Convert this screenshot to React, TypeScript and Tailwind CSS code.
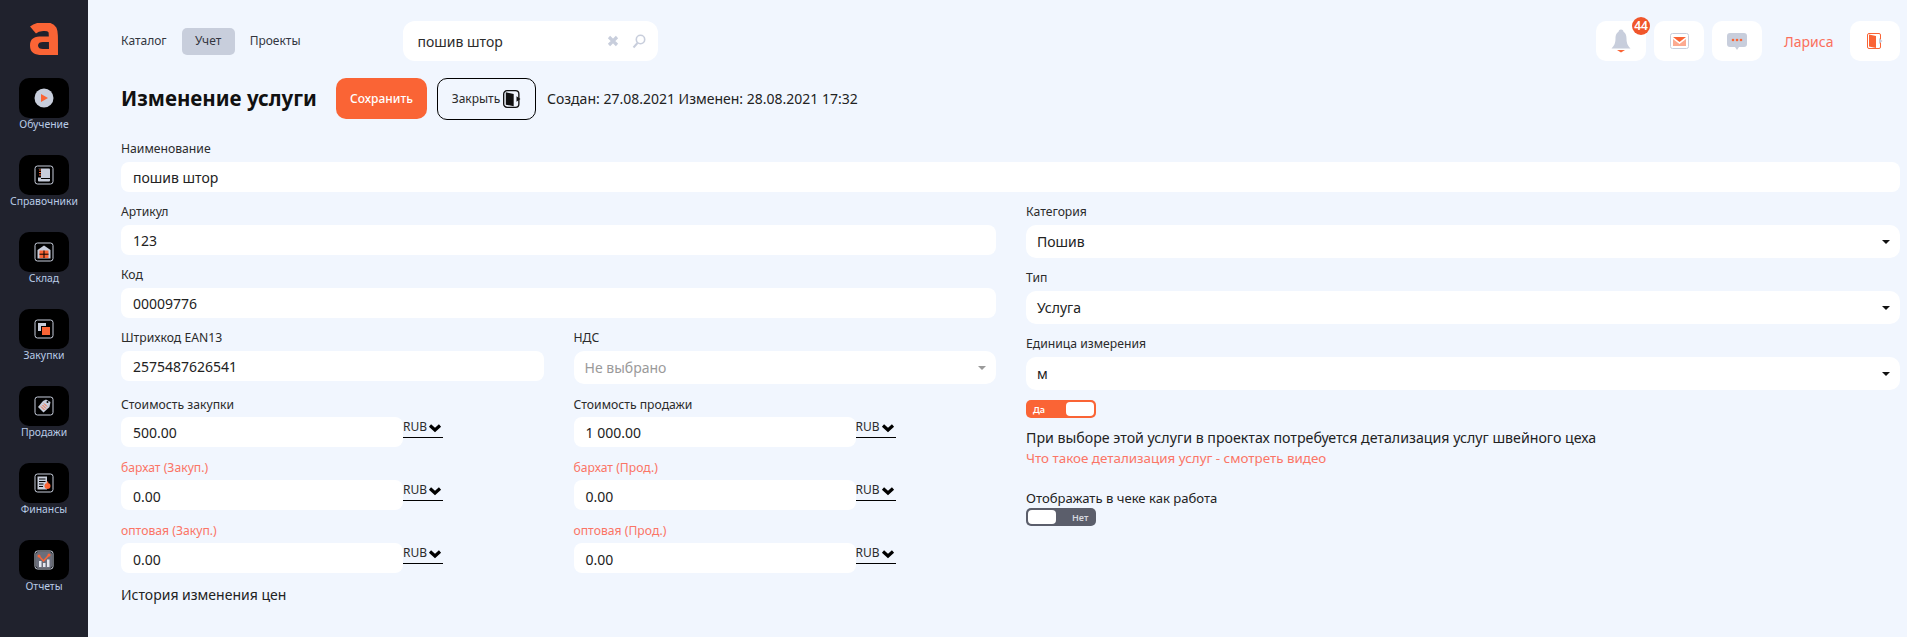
import React from "react";

const O = "#fa6435";
const G = "#c8cedc";

function Frame({ children }: { children: React.ReactNode }) {
  return (
    <svg width="20" height="20" viewBox="0 0 20 20" fill="none">
      <rect x="1" y="1" width="18" height="18" rx="2.5" stroke="#c8cedc" strokeWidth="1" />
      {children}
    </svg>
  );
}

const navIcons: Record<string, React.ReactNode> = {
  play: (
    <svg width="20" height="20" viewBox="0 0 20 20">
      <circle cx="10" cy="10" r="9.5" fill="#c8cedc" />
      <path d="M7 6l7 4-7 4z" fill={O} />
    </svg>
  ),
  book: (
    <Frame>
      <rect x="4" y="3.5" width="12" height="13" rx="1" fill="#c8cedc" />
      <rect x="4" y="3.5" width="3" height="9" fill="#000" />
      <path d="M5 5h2M5 7.5h2M5 10h2" stroke={O} strokeWidth="1.2" />
      <path d="M7 13.5h9" stroke="#000" strokeWidth="1" />
    </Frame>
  ),
  store: (
    <Frame>
      <path d="M3.5 8L10 3.5 16.500 8v8.500h-13z" fill="#c8cedc" />
      <rect x="5.500" y="8.500" width="9" height="7.500" fill={O} />
      <path d="M10 8.500v7.500M5.500 12.200h9" stroke="#000" strokeWidth="1" />
    </Frame>
  ),
  buy: (
    <Frame>
      <path d="M4 4h8v3H7v5H4z" fill="#c8cedc" />
      <rect x="8" y="8" width="8" height="8" fill={O} />
    </Frame>
  ),
  tag: (
    <Frame>
      <path d="M12 3.500l4.500 2.500-1 5-6 5.500-5.500-5.500 5-6z" fill="#c8cedc" />
      <path d="M7 10.500l3.500 3.500M8.500 9l3.500 3.500M10 7.500l3 3" stroke={O} strokeWidth="1" />
      <circle cx="13.500" cy="6" r="1" fill="#000" />
    </Frame>
  ),
  fin: (
    <Frame>
      <rect x="3.500" y="3.500" width="9.500" height="13" fill="#c8cedc" />
      <path d="M5 6h6.500M5 8.500h6.500M5 11h4.500M5 13.500h4" stroke="#000" strokeWidth="1" />
      <circle cx="13.500" cy="13" r="3" fill={O} />
      <path d="M13.500 8.500v2" stroke={O} strokeWidth="1.500" />
    </Frame>
  ),
  report: (
    <Frame>
      <rect x="2" y="2" width="16" height="16" rx="2" fill="#6b6e7b" />
      <path d="M5 11h2.500v6H5zM9 13h2.500v4H9zM13 9.500h2.500V17H13z" fill="#e4e7ee" />
      <path d="M5 6l4.500 5L15 5" stroke={O} strokeWidth="1.500" fill="none" />
      <circle cx="5" cy="6" r="1.500" fill={O} />
      <circle cx="15" cy="5" r="1.500" fill={O} />
    </Frame>
  ),
};

const nav = [
  ["play", "Обучение"],
  ["book", "Справочники"],
  ["store", "Склад"],
  ["buy", "Закупки"],
  ["tag", "Продажи"],
  ["fin", "Финансы"],
  ["report", "Отчеты"],
];

function Sidebar() {
  return (
    <aside className="w-[88px] h-full shrink-0 bg-[#20222d] flex flex-col items-center pt-[23px]">
      <svg width="30" height="32" viewBox="0 0 30 32" className="mb-[23px] ml-[1px]">
        <path d="M3 7C7 3.500 19 1.500 22.500 7 23.500 9 23.500 12 23.500 32" stroke={O} strokeWidth="9" fill="none" />
        <path d="M26 13.500v18.500H12c-7 0-12-2-12-9.500s5-9 12-9zM19 19h-6c-3 0-5 1-5 3.500s2 3.500 5 3.500h6z" fill={O} fillRule="evenodd" />
      </svg>
      <nav className="flex flex-col gap-[37px] items-center">
        {nav.map(([k, t]) => (
          <div key={k} className="h-[40px] w-[88px] flex flex-col items-center">
            <div className="w-[50px] h-[40px] shrink-0 bg-black rounded-[10px] flex items-center justify-center">
              {navIcons[k]}
            </div>
            <span className="text-[10.4px] leading-[14px] text-[#b9cbe6] whitespace-nowrap mt-[-1px]">{t}</span>
          </div>
        ))}
      </nav>
    </aside>
  );
}

function Tile({ children, className = "" }: { children: React.ReactNode; className?: string }) {
  return (
    <div className={"relative w-[50px] h-[40px] bg-white rounded-[10px] flex items-center justify-center " + className}>
      {children}
    </div>
  );
}

function Header() {
  return (
    <header className="h-[40px] flex items-center">
      <div className="flex items-center text-[12px] text-[#33363f]">
        <span className="pr-[15px]">Каталог</span>
        <span className="w-[53px] h-[27px] bg-[#c8cedc] rounded-[5px] flex items-center justify-center">Учет</span>
        <span className="pl-[15px]">Проекты</span>
      </div>
      <div className="ml-[102px] w-[255px] h-[40px] bg-white rounded-[12px] flex items-center pl-[15px] pr-[12px] text-[14px] text-[#2b2b2b]">
        <span className="flex-1">пошив штор</span>
        <svg width="12" height="12" viewBox="0 0 12 12" className="mr-[13px]">
          <path d="M2 2l8 8M10 2l-8 8" stroke={G} strokeWidth="3.200" />
        </svg>
        <svg width="14" height="15" viewBox="0 0 14 15" fill="none">
          <circle cx="8.500" cy="5.500" r="4.200" stroke={G} strokeWidth="1.600" />
          <path d="M5.500 9L1.500 13.500" stroke={G} strokeWidth="2" />
        </svg>
      </div>
      <div className="ml-auto flex items-center gap-[8px]">
        <Tile>
          <svg width="20" height="25" viewBox="0 0 20 25">
            <circle cx="10" cy="3" r="2.500" fill={G} />
            <path d="M10 2.500c-4.500 0-5.500 3.500-5.500 7 0 5-1.500 7.500-4 10h19c-2.500-2.500-4-5-4-10 0-3.500-1-7-5.500-7z" fill={G} />
            <path d="M6 21h8l-4 2.500z" fill={O} />
          </svg>
          <span className="absolute right-[-4px] top-[-4px] w-[18px] h-[18px] rounded-full bg-[#f0562b] text-white text-[12px] font-semibold flex items-center justify-center leading-none">
            44
          </span>
        </Tile>
        <Tile>
          <svg width="19" height="16" viewBox="0 0 19 16" fill="none">
            <rect x="0.500" y="0.500" width="18" height="15" rx="2" stroke={G} />
            <path d="M3 4h13L9.500 9z" fill={O} />
            <path d="M3 6l6.500 5L16 6v7H3z" fill={O} opacity="0.55" />
          </svg>
        </Tile>
        <Tile>
          <svg width="20" height="17" viewBox="0 0 20 17">
            <path d="M3 0h14a3 3 0 013 3v8a3 3 0 01-3 3h-5l-2 3-2-3H3a3 3 0 01-3-3V3a3 3 0 013-3z" fill={G} />
            <circle cx="6" cy="7" r="1.300" fill={O} />
            <circle cx="10" cy="7" r="1.300" fill={O} />
            <circle cx="14" cy="7" r="1.300" fill={O} />
          </svg>
        </Tile>
        <span className="w-[72px] pl-[14px] text-[14px] text-[#fb6f5b] whitespace-nowrap">Лариса</span>
        <Tile>
          <svg width="16" height="16" viewBox="0 0 16 16" fill="none">
            <rect x="0.500" y="0.500" width="13" height="15" rx="1.500" stroke={O} />
            <path d="M2 1.500l7 1.500v12l-7-1.500z" fill={O} />
            <path d="M12 5l3.500 3-3.500 3z" fill={G} />
          </svg>
        </Tile>
      </div>
    </header>
  );
}

function Field({ label, red, low, children, className = "" }: { label: string; red?: boolean; low?: boolean; children: React.ReactNode; className?: string }) {
  return (
    <div className={className}>
      <div className={"h-[18px] mb-[5px] text-[12.2px] whitespace-nowrap " + (low ? "leading-[22px] " : "leading-[20px] ") + (red ? "text-[#fb7566]" : "text-[#2b2b2b]")}>
        {label}
      </div>
      {children}
    </div>
  );
}

function Input({ value, className = "" }: { value: string; className?: string }) {
  return (
    <div className={"h-[30px] bg-white rounded-[8px] flex items-center pl-[12px] text-[14px] text-[#222] " + className}>
      {value}
    </div>
  );
}

function Select({ value, muted }: { value: string; muted?: boolean }) {
  return (
    <div className={"h-[33px] bg-white rounded-[10px] flex items-center pl-[11px] pr-[10px] text-[14px] " + (muted ? "text-[#9a9a9a]" : "text-[#222]")}>
      <span className="flex-1">{value}</span>
      <span className={"w-0 h-0 border-x-[4px] border-x-transparent border-t-[4px] " + (muted ? "border-t-[#9a9a9a]" : "border-t-[#111]")} />
    </div>
  );
}

function Price({ label, value, red }: { label: string; value: string; red?: boolean }) {
  return (
    <Field label={label} red={red} low>
      <div className="flex items-start">
        <Input value={value} className={"w-[282px] " + (red ? "pt-[2px]" : "")} />
        <div className="w-[40px] h-[21px] border-b border-black flex items-center text-[12px] text-[#2b2b2b]">
          <span>RUB</span>
          <svg width="14" height="10" viewBox="0 0 14 10" className="ml-[1px] mt-[2px]">
            <path d="M2 2.500l5 4.500 5-4.500" stroke="#000" strokeWidth="3.200" fill="none" />
          </svg>
        </div>
      </div>
    </Field>
  );
}

function Toggle({ on }: { on: boolean }) {
  return (
    <div className={"w-[70px] h-[18px] rounded-[5px] p-[2px] flex items-center " + (on ? "bg-[#fa6435]" : "bg-[#5b5e6b]")}>
      {on ? (
        <>
          <span className="w-[38px] pl-[5px] text-[9px] leading-none font-semibold text-white">Да</span>
          <span className="w-[28px] h-[14px] bg-white rounded-[4px]" />
        </>
      ) : (
        <>
          <span className="w-[28px] h-[14px] bg-white rounded-[4px]" />
          <span className="flex-1 pl-[16px] text-[9px] leading-none font-semibold text-[#d5d7de]">Нет</span>
        </>
      )}
    </div>
  );
}

export default function App() {
  return (
    <div className="w-[1907px] h-[637px] overflow-hidden flex bg-[#f1f6fe] text-[#222]" style={{ fontFamily: '"Noto Sans", sans-serif' }}>
      <Sidebar />
      <main className="flex-1 pl-[33px] pr-[7px] pt-[21px]">
        <Header />
        <div className="mt-[17px] flex items-center h-[41px]">
          <h1 className="w-[215px] text-[20.5px] font-bold text-[#111] whitespace-nowrap">Изменение услуги</h1>
          <button className="w-[91px] h-[41px] bg-[#fa6435] text-white text-[12px] font-medium rounded-[10px]">Сохранить</button>
          <button className="ml-[10px] w-[99px] h-[42px] border border-black rounded-[10px] text-[12px] text-[#2b2b2b] flex items-center justify-center gap-[3px]">
            Закрыть
            <svg width="18" height="18" viewBox="0 0 16 16" fill="none">
              <rect x="0.600" y="0.600" width="13.500" height="14.800" rx="3" stroke="#111" strokeWidth="1.200" />
              <path d="M2.500 2l7 1.500v11l-7-1.500z" fill="#111" />
              <path d="M12 5.500l3.500 2.500-3.500 2.500z" fill="#111" />
            </svg>
          </button>
          <span className="ml-[11px] text-[14px] text-[#222] whitespace-nowrap">Создан: 27.08.2021 Изменен: 28.08.2021 17:32</span>
        </div>
        <Field label="Наименование" className="mt-[20px]">
          <Input value="пошив штор" />
        </Field>
        <div className="mt-[10px] flex gap-[30px]">
          <div className="w-[875px] flex flex-col gap-[10px]">
            <Field label="Артикул"><Input value="123" /></Field>
            <Field label="Код"><Input value="00009776" /></Field>
            <div className="grid grid-cols-2 gap-x-[30px] gap-y-[10px]">
              <Field label="Штрихкод EAN13"><Input value="2575487626541" /></Field>
              <Field label="НДС"><Select value="Не выбрано" muted /></Field>
              <Price label="Стоимость закупки" value="500.00" />
              <Price label="Стоимость продажи" value="1 000.00" />
              <Price label="бархат (Закуп.)" value="0.00" red />
              <Price label="бархат (Прод.)" value="0.00" red />
              <Price label="оптовая (Закуп.)" value="0.00" red />
              <Price label="оптовая (Прод.)" value="0.00" red />
            </div>
            <div className="text-[14px] leading-[24px] text-[#222]">История изменения цен</div>
          </div>
          <div className="flex-1 flex flex-col">
            <div className="flex flex-col gap-[10px]">
              <Field label="Категория"><Select value="Пошив" /></Field>
              <Field label="Тип"><Select value="Услуга" /></Field>
              <Field label="Единица измерения"><Select value="м" /></Field>
            </div>
            <div className="mt-[10px]"><Toggle on /></div>
            <p className="mt-[10px] text-[14.2px] leading-[20px] text-[#222]">При выборе этой услуги в проектах потребуется детализация услуг швейного цеха</p>
            <p className="text-[13.4px] leading-[20px] text-[#fb7566]">Что такое детализация услуг - смотреть видео</p>
            <p className="mt-[20px] text-[13.1px] leading-[20px] text-[#222]">Отображать в чеке как работа</p>
            <Toggle on={false} />
          </div>
        </div>
      </main>
    </div>
  );
}
